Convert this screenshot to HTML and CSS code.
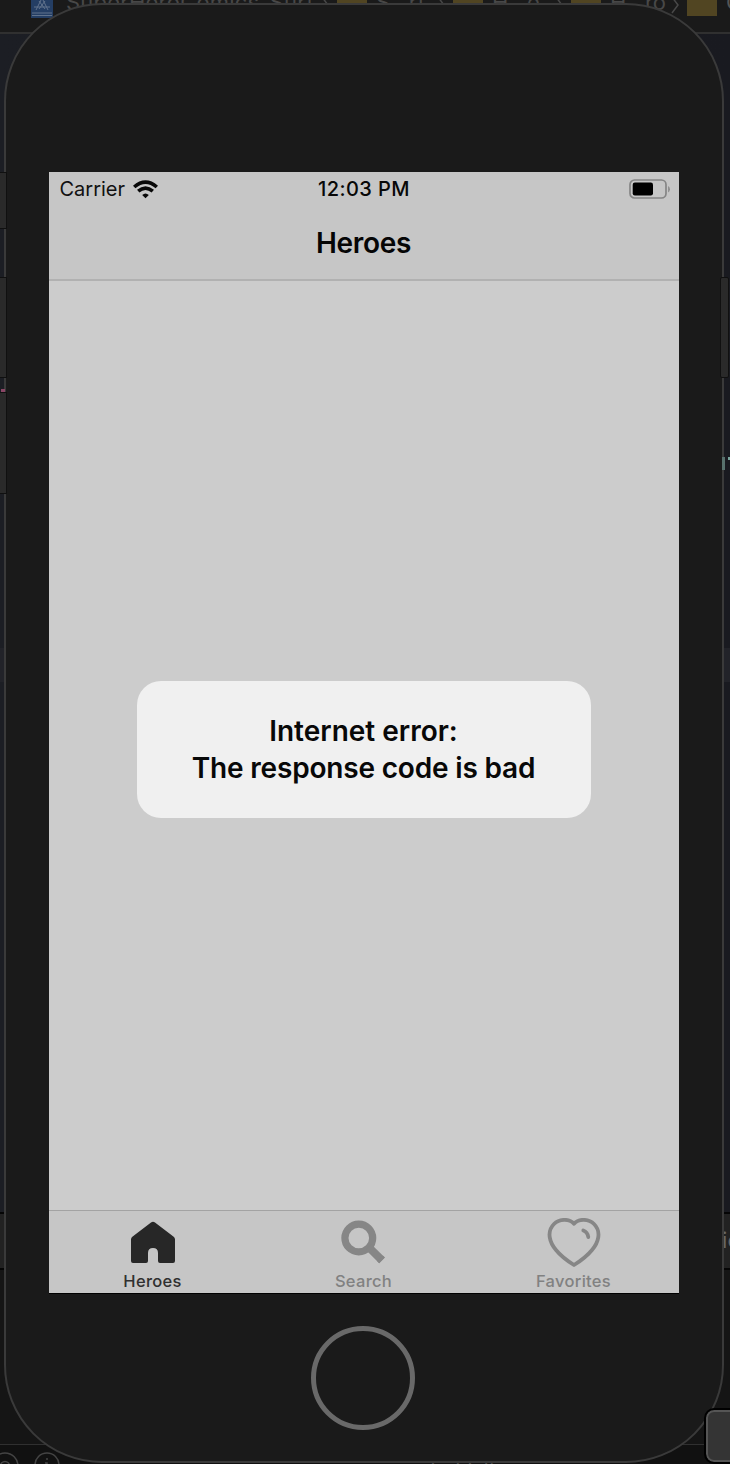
FILE: index.html
```html
<!DOCTYPE html>
<html lang="en">
<head>
<meta charset="utf-8">
<title>Heroes</title>
<link rel="stylesheet" href="styles.css">
</head>
<body>
<div class="desktop">
  <div class="editor">
    <div class="crumbs">
      <svg class="app-icon" viewBox="0 0 22 22"><rect width="22" height="22" fill="#243e64"/><path d="M1 17h20M1 19.500h20M5 14l6-12 6 12M3 11h16M8 5l6 8M14 5l-6 8" fill="none" stroke="#61738c" stroke-width="1"/></svg>
      <span class="crumb project">SuperHeroComics_Surf</span>
      <svg class="chevron" viewBox="0 0 8 18"><path d="M1 1l6 8-6 8"/></svg>
      <i class="folder"></i><span class="crumb c1">S&nbsp; &nbsp;rf</span>
      <svg class="chevron" viewBox="0 0 8 18"><path d="M1 1l6 8-6 8"/></svg>
      <i class="folder"></i><span class="crumb c2">H&nbsp; &nbsp;e</span>
      <svg class="chevron" viewBox="0 0 8 18"><path d="M1 1l6 8-6 8"/></svg>
      <i class="folder"></i><span class="crumb c3">H&nbsp; &nbsp;ro</span>
      <svg class="chevron" viewBox="0 0 8 18"><path d="M1 1l6 8-6 8"/></svg>
      <i class="folder"></i><span class="crumb c4">C</span>
    </div>
    <div class="code"><div class="line-highlight"></div></div>
    <div class="debug-bar">ic</div>
    <div class="console"></div>
    <div class="filter-bar">
      <svg class="filter-icons" viewBox="0 0 64 22"><g fill="none" stroke="#444" stroke-width="1.5"><circle cx="5" cy="14" r="13"/><circle cx="5" cy="14" r="4.500"/><circle cx="47" cy="13" r="12"/><path d="M47 6v2M45 11h2v8"/></g></svg>
      <span class="filter-text">(☰) Filter</span>
    </div>
  </div>

  <div class="side-key mute"></div>
  <div class="side-key vol-up"></div>
  <div class="side-key vol-down"></div>
  <div class="code-mark pink"></div>

  <div class="phone">
    <div class="screen">
      <header class="top">
        <div class="status">
          <div class="carrier"><span class="carrier-name">Carrier</span>
            <svg class="wifi" viewBox="0 0 25 19"><g fill="none" stroke="#080808" stroke-width="3.6"><path d="M1.2 7Q12.500-2.900 23.800 7"/><path d="M5.200 11.200Q12.500 5 19.800 11.200"/></g><path d="M12.500 18.200L9.200 15Q12.500 11.800 15.800 15Z" fill="#080808"/></svg>
          </div>
          <span class="time">12:03 PM</span>
          <svg class="battery" viewBox="0 0 42 20"><rect x="1" y="1" width="36" height="18" rx="4.500" fill="none" stroke="#858585" stroke-width="1.700"/><rect x="3.700" y="3.500" width="20.300" height="13" rx="2.200" fill="#000"/><path d="M39.200 7v6.400q1.600-1 1.600-3.200t-1.600-3.200z" fill="#858585"/></svg>
        </div>
        <h1 class="title">Heroes</h1>
      </header>
      <main class="content">
        <div class="alert"><span class="alert-a">Internet error:</span><span class="alert-b">The response code is bad</span></div>
      </main>
      <nav class="tabs">
        <div class="tab active">
          <svg class="tab-icon" viewBox="0 0 54 52"><path d="M25 4.500Q27 3 29 4.500L48 19Q49 20 49 21.500V43Q49 45 47 45H34Q32 45 32 43V35Q32 30 27 30T22 35V43Q22 45 20 45H7Q5 45 5 43V21.500Q5 20 6 19Z" fill="#272727"/></svg>
          <span class="label heroes">Heroes</span>
        </div>
        <div class="tab">
          <svg class="tab-icon" viewBox="0 0 54 52"><g fill="none" stroke="#868686"><circle cx="21.800" cy="20" r="13.900" stroke-width="7.200"/><path d="M31.500 29L45 42.300" stroke-width="8"/><path d="M43 40.300L45 42.300" stroke-width="8" stroke-linecap="butt"/></g></svg>
          <span class="label search">Search</span>
        </div>
        <div class="tab">
          <svg class="tab-icon" viewBox="0 0 54 52"><g fill="none" stroke="#868686" stroke-width="3.800" stroke-linecap="round"><path d="M27 5.800C22 0 12 1 7 6C-1 14 3 25 9 32Q15 39.500 27 47Q39 39.500 45 32C51 25 55 14 47 6C42 1 32 0 27 5.800Z" stroke-linejoin="round"/><path d="M36.300 12.500Q40.500 14 41.300 19"/></g></svg>
          <span class="label favorites">Favorites</span>
        </div>
      </nav>
    </div>
    <div class="home"></div>
  </div>

  <div class="side-key power"></div>
  <div class="code-mark teal"></div>
  <div class="code-mark teal-dot"></div>
  <div class="corner-button"></div>
</div>
</body>
</html>
```
FILE: styles.css
```css
* { box-sizing: border-box; }
body { margin: 0; background: #111; font-family: Inter, "Liberation Sans", sans-serif; }
.desktop { position: relative; width: 730px; height: 1464px; overflow: hidden; }

/* Editor window behind the simulator */
.editor { position: absolute; inset: 0; display: flex; flex-direction: column; color: #484848; }
.crumbs { height: 34px; flex: none; background: #1a1a1a; border-bottom: 2px solid #303030; display: flex; align-items: flex-start; padding-left: 31px; overflow: hidden; white-space: nowrap; }
.app-icon { width: 22px; height: 22px; flex: none; margin-top: -4px; }
.crumb { flex: none; font-size: 22px; line-height: 24px; margin-top: -10px; margin-left: 9px; }
.project { width: 255px; margin-left: 13px; letter-spacing: 0.200px; }
.chevron { width: 8px; height: 18px; flex: none; margin-top: -4px; fill: none; stroke: #484848; stroke-width: 1.500; }
.folder { width: 30px; height: 20px; flex: none; margin-left: 8px; margin-top: -4px; background: #514522; }
.c1 { width: 61px; }
.c2 { width: 63px; }
.c3 { width: 61px; }
.c4 { color: #555; }
.code { height: 1178px; flex: none; background: linear-gradient(90deg, #1c1e24, #191a20); padding-top: 614px; }
.line-highlight { height: 34px; background: #222329; }
.debug-bar { height: 58px; flex: none; border: solid #050505; border-width: 2px 0; background: #222; color: #666; font-size: 22px; line-height: 53px; text-align: right; margin-right: -10px; }
.console { height: 174px; flex: none; background: #151515; }
.filter-bar { height: 20px; flex: none; border-top: 1px solid #303030; background: #111; display: flex; overflow: hidden; }
.filter-icons { width: 64px; height: 22px; margin-top: 7px; flex: none; }
.filter-text { margin-left: 365px; font-size: 20px; line-height: 24px; padding-top: 11px; }

/* Hardware keys sit over the device edge */
.side-key { position: absolute; z-index: 2; background: #2a2a2a; border: 1px solid #101010; }
.mute { left: -2px; top: 172px; width: 9px; height: 57px; }
.vol-up { left: -2px; top: 277px; width: 9px; height: 101px; }
.vol-down { left: -2px; top: 392px; width: 9px; height: 102px; }
.power { left: 720px; top: 277px; width: 9px; height: 101px; border-radius: 2px; }
.code-mark { position: absolute; z-index: 2; }
.pink { left: 1px; top: 389px; width: 4px; height: 3px; background: #8a4665; }
.teal { left: 722px; top: 457px; width: 3px; height: 13px; background: #58716d; }
.teal-dot { left: 728px; top: 457px; width: 2px; height: 3px; background: #78a59d; }

.phone { position: absolute; left: 4px; top: 3px; width: 720px; height: 1460px; border: 2px solid #3a3a3a; border-radius: 98px; background: #1a1a1a; display: flex; flex-direction: column; align-items: center; padding-top: 167px; }
.screen { width: 630px; height: 1122px; flex: none; margin-right: 1px; background: #cccccc; border-bottom: 1px solid #000; display: flex; flex-direction: column; }
.top { height: 109px; flex: none; background: #c6c6c6; border-bottom: 2px solid #b1b1b1; }
.status { height: 34px; display: grid; grid-template-columns: 1fr auto 1fr; align-items: center; padding: 0 8px 0 11px; }
.carrier { display: flex; align-items: center; color: #111; font-size: 20px; }
.carrier-name { width: 65px; letter-spacing: 0; }
.wifi { width: 25px; height: 19px; margin-left: 8px; }
.time { font-size: 20px; font-weight: 500; letter-spacing: 0.400px; color: #080808; margin-right: 2px; }
.battery { width: 42px; height: 20px; justify-self: end; }
.title { margin: 0; padding-top: 19px; font-size: 28px; line-height: 37px; font-weight: 600; letter-spacing: -0.300px; text-align: center; color: #050505; }
.content { height: 929px; flex: none; display: flex; justify-content: center; padding-top: 400px; }
.alert { width: 454px; height: 137px; flex: none; margin-left: 1px; border-radius: 24px; background: #f0f0f0; display: flex; flex-direction: column; align-items: center; padding: 32px 1px 0 0; font-size: 28px; font-weight: 600; line-height: 37px; color: #080808; white-space: nowrap; }
.alert-b { letter-spacing: -0.180px; }
.tabs { height: 83px; flex: none; background: #c6c6c6; border-top: 1px solid #a3a3a3; display: grid; grid-template-columns: repeat(3, 210px); }
.tab { display: flex; flex-direction: column; align-items: center; color: #818181; padding-top: 6px; }
.tab:first-child { padding-right: 2px; }
.tab-icon { width: 54px; height: 52px; margin-top: 1px; }
.label { font-size: 16.500px; line-height: 20px; margin-top: 1px; font-weight: 500; letter-spacing: 0.300px; }
.active { color: #303030; }
.home { width: 104px; height: 104px; border: 5px solid #696969; border-radius: 50%; margin-top: 32px; flex: none; margin-right: 2px; }
.corner-button { position: absolute; z-index: 3; left: 706px; top: 1410px; width: 60px; height: 52px; border: 2px solid #555; outline: 2px solid #000; border-radius: 8px; background: #343434; }
```
